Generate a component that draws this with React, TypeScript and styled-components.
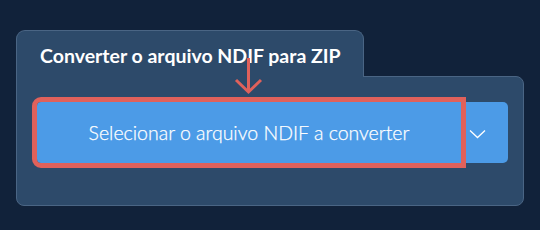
import React from "react";
import styled, { createGlobalStyle } from "styled-components";

const Global = createGlobalStyle`
  html, body { margin: 0; padding: 0; }
  body {
    background: #11223a;
    width: 540px;
    height: 230px;
    overflow: hidden;
    font-family: Lato, "Noto Sans", sans-serif;
  }
`;

const Page = styled.div`
  position: relative;
  padding: 30px 16px 0 16px;
`;

const Tab = styled.div`
  box-sizing: border-box;
  width: 348px;
  height: 47px;
  margin-bottom: -1px;
  position: relative;
  z-index: 1;
  background: #2d4a6a;
  border: 1px solid #4a6584;
  border-bottom: none;
  border-radius: 9px 9px 0 0;
  padding: 14px 0 0 23px;
  color: #ffffff;
  font-weight: 700;
  font-size: 19.5px;
  line-height: 22px;
  white-space: nowrap;
`;

const Panel = styled.div`
  box-sizing: border-box;
  width: 508px;
  height: 130px;
  background: #2d4a6a;
  border: 1px solid #4a6584;
  border-radius: 0 8px 8px 8px;
  padding: 25px 15px 0 20px;
`;

const Row = styled.div`
  display: flex;
  height: 61px;
`;

const MainButton = styled.button`
  width: 424px;
  height: 61px;
  border: none;
  margin: 0;
  background: #4c9be7;
  color: #ffffff;
  font-family: Lato, "Noto Sans", sans-serif;
  font-weight: 300;
  font-size: 19.5px;
  -webkit-text-stroke: 0.25px #ffffff;
  border-radius: 4px 0 0 4px;
  outline: 5px solid #e0615b;
  position: relative;
  z-index: 1;
  padding: 0;
`;

const DropButton = styled.button`
  box-sizing: border-box;
  width: 47px;
  height: 61px;
  border: none;
  margin: 0;
  padding: 3px 15px 0 0;
  background: #4c9be7;
  border-radius: 0 5px 5px 0;
  display: flex;
  align-items: center;
  justify-content: center;
`;

const Arrow = styled.svg`
  position: absolute;
  left: 234px;
  top: 57px;
  z-index: 2;
`;

export default function App() {
  return (
    <>
      <Global />
      <Page>
        <Tab>Converter o arquivo NDIF para ZIP</Tab>
        <Panel>
          <Row>
            <MainButton>Selecionar o arquivo NDIF a converter</MainButton>
            <DropButton aria-label="mais opções">
              <svg width="17" height="10" viewBox="0 0 17 10">
                <polyline points="1,1.5 8.5,8.5 16,1.5" fill="none" stroke="#ffffff" strokeWidth="1.3" />
              </svg>
            </DropButton>
          </Row>
        </Panel>
        <Arrow width="30" height="38" viewBox="0 0 30 38">
          <line x1="14.5" y1="1" x2="14.5" y2="35" stroke="#e0615b" strokeWidth="3" />
          <polyline points="2,23 14.5,35 27,23" fill="none" stroke="#e0615b" strokeWidth="3" />
        </Arrow>
      </Page>
    </>
  );
}
